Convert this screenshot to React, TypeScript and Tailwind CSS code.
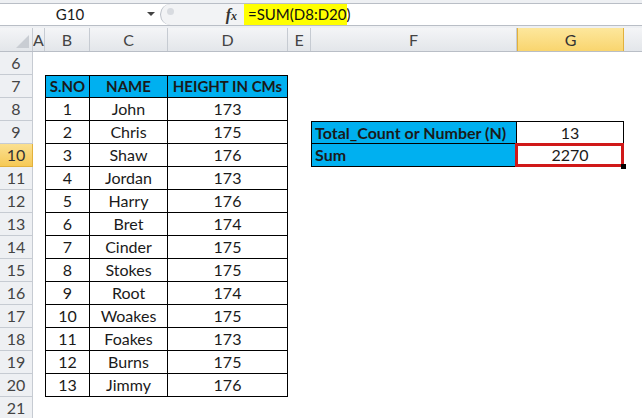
import React from "react";

const cols = [
  { key: "A", w: "w-[12px]" },
  { key: "B", w: "w-[45px]" },
  { key: "C", w: "w-[78px]" },
  { key: "D", w: "w-[120px]" },
  { key: "E", w: "w-[23px]" },
  { key: "F", w: "w-[206px]" },
  { key: "G", w: "w-[107px]" },
];

const people = [
  ["1", "John", "173"],
  ["2", "Chris", "175"],
  ["3", "Shaw", "176"],
  ["4", "Jordan", "173"],
  ["5", "Harry", "176"],
  ["6", "Bret", "174"],
  ["7", "Cinder", "175"],
  ["8", "Stokes", "175"],
  ["9", "Root", "174"],
  ["10", "Woakes", "175"],
  ["11", "Foakes", "173"],
  ["12", "Burns", "175"],
  ["13", "Jimmy", "176"],
];

function RowHeader({ n, active }: { n: number; active?: boolean }) {
  return (
    <div
      className={`w-[33px] shrink-0 h-full flex items-center justify-center border-r border-b text-[16px] ${
        active
          ? "bg-gradient-to-b from-[#fbe08f] to-[#f6c955] border-[#e2b13c] text-[#333]"
          : "bg-[#eef0f3] border-[#c6cbd2] text-[#444]"
      }`}
    >
      {n}
    </div>
  );
}

export default function App() {
  const rows = Array.from({ length: 16 }, (_, i) => i + 6);

  return (
    <div className="w-[642px] h-[418px] overflow-hidden bg-white font-['Lato','Open_Sans',sans-serif] text-[#1a1a1a]">
      {/* Formula bar */}
      <div className="h-[3px] bg-[#eef0f3]" />
      <div className="h-[23px] flex border-y border-[#b9bec6] bg-white">
        <div className="w-[160px] shrink-0 flex items-center relative">
          <span className="flex-1 text-center text-[15px] pr-[20px]">G10</span>
          <span className="absolute left-[147px] top-[8px] w-0 h-0 border-l-[4px] border-r-[4px] border-t-[4px] border-l-transparent border-r-transparent border-t-[#444]" />
        </div>
        <div className="w-[84px] shrink-0 flex items-center bg-[#f2f3f5] rounded-l-full border-l border-[#b9bec6] relative">
          <span className="absolute left-[6px] top-[4px] w-[7px] h-[7px] rounded-full bg-[#d8dbe0]" />
          <span className="ml-auto mr-[7px] italic font-['Liberation_Serif',serif] font-bold text-[16px] text-[#333]">
            f<span className="text-[12px]">x</span>
          </span>
        </div>
        <div className="w-[103px] shrink-0 bg-[#ffff00] flex items-center pl-[4px] text-[15px] text-[#111]">
          =SUM(D8:D20)
        </div>
        <div className="flex-1" />
      </div>
      <div className="h-[2px] bg-[#eef0f3]" />

      {/* Column headers */}
      <div className="h-[24px] flex border-b border-[#b9bec6] bg-gradient-to-b from-[#f4f5f7] to-[#e3e6ea]">
        <div className="w-[33px] shrink-0 border-r border-[#c6cbd2] relative">
          <span
            className="absolute right-[3px] bottom-[3px] w-0 h-0"
            style={{ borderBottom: "13px solid #c9cdd3", borderLeft: "13px solid transparent" }}
          />
        </div>
        {cols.map((c) => (
          <div
            key={c.key}
            className={`${c.w} shrink-0 flex items-center justify-center border-r text-[16px] ${
              c.key === "G"
                ? "bg-gradient-to-b from-[#fde79c] to-[#f9d56e] border-[#e2b13c] border-x text-[#333]"
                : "border-[#c6cbd2] text-[#444]"
            }`}
          >
            {c.key}
          </div>
        ))}
        <div className="flex-1" />
      </div>

      {/* Rows */}
      {rows.map((r) => {
        const pi = r - 8;
        const inTable = r >= 7 && r <= 20;
        const isHead = r === 7;
        const person = pi >= 0 && pi < people.length ? people[pi] : null;
        const tb = isHead ? "border-t bg-[#00b0f0] font-bold text-[15px]" : "text-[16px]";
        const base = "shrink-0 h-full flex items-center justify-center border-black";
        return (
          <div key={r} className="h-[23px] flex">
            <RowHeader n={r} active={r === 10} />
            <div className="w-[12px] shrink-0" />
            {inTable ? (
              <>
                <div className={`w-[45px] ${base} border-l border-r border-b ${tb}`}>
                  {isHead ? "S.NO" : person?.[0]}
                </div>
                <div className={`w-[78px] ${base} border-r border-b ${tb}`}>
                  {isHead ? "NAME" : person?.[1]}
                </div>
                <div className={`w-[120px] ${base} border-r border-b ${tb}`}>
                  {isHead ? "HEIGHT IN CMs" : person?.[2]}
                </div>
              </>
            ) : (
              <div className="w-[243px] shrink-0" />
            )}
            <div className="w-[23px] shrink-0" />
            {r === 9 && (
              <>
                <div className="w-[206px] shrink-0 h-full flex items-center pl-[3px] bg-[#00b0f0] font-bold text-[16px] border border-black">
                  Total_Count or Number (N)
                </div>
                <div className="w-[107px] shrink-0 h-full flex items-center justify-center text-[16px] border-y border-r border-black">
                  13
                </div>
              </>
            )}
            {r === 10 && (
              <>
                <div className="w-[206px] shrink-0 h-full flex items-center pl-[3px] bg-[#00b0f0] font-bold text-[16px] border-x border-b border-black">
                  Sum
                </div>
                <div className="w-[107px] shrink-0 h-full relative flex items-center justify-center text-[16px] border-r border-b border-black">
                  <div className="absolute left-[-2px] top-[-1px] right-[-1px] bottom-[-1px] border-[3px] border-[#d01818]" />
                  <div className="absolute right-[-3px] bottom-[-3px] w-[5px] h-[5px] bg-black" />
                  2270
                </div>
              </>
            )}
          </div>
        );
      })}
    </div>
  );
}
